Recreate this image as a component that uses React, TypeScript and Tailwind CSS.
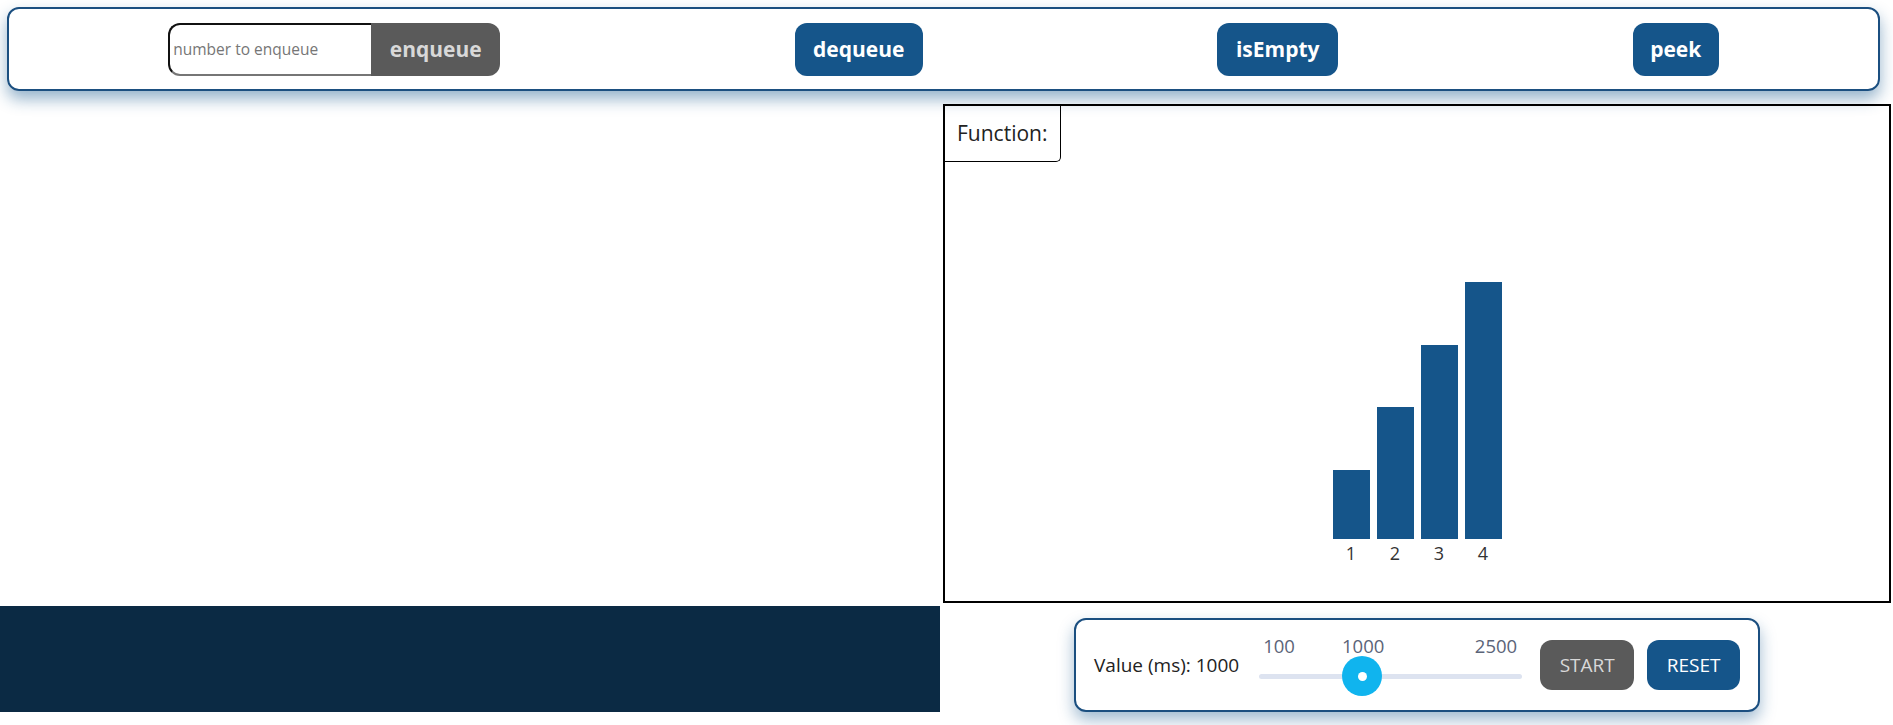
const bars = [
  { label: "1", height: 69 },
  { label: "2", height: 132 },
  { label: "3", height: 194 },
  { label: "4", height: 257 },
];

const actionButton =
  "h-[53px] rounded-[12px] bg-[#15558a] text-[21px] font-bold leading-none text-white";

function TopBar() {
  return (
    <header className="ml-[7px] mt-[7px] flex h-[84px] w-[1873px] items-center justify-around rounded-[12px] border-2 border-[#1b4f80] px-[12px] shadow-[0_8px_16px_rgba(21,86,139,0.45)]">
      <div className="flex h-[53px]">
        <input
          placeholder="number to enqueue"
          className="h-full w-[203px] rounded-l-[12px] border-2 border-r-0 border-t-[#111] border-l-[#111] border-b-[#767676] bg-white px-[3px] text-[15.5px] text-[#222] outline-none placeholder:text-[#767676]"
        />
        <button className="h-full w-[129px] rounded-r-[12px] bg-[#5a5a5a] text-[21px] font-bold leading-none text-[#d8d8d8]">
          enqueue
        </button>
      </div>
      <button className={`${actionButton} w-[128px]`}>dequeue</button>
      <button className={`${actionButton} w-[121px]`}>isEmpty</button>
      <button className={`${actionButton} w-[86px]`}>peek</button>
    </header>
  );
}

function FunctionPanel() {
  return (
    <section className="flex h-[499px] flex-col border-2 border-black">
      <div className="flex h-[56px] w-fit items-center rounded-br-[5px] border-r border-b border-black pl-[12px] pr-[13px] text-[21px] text-[#222]">
        Function:
      </div>
      <div className="mt-[120px] flex justify-center gap-[7px]">
        {bars.map((bar) => (
          <div key={bar.label} className="flex flex-col items-center justify-end">
            <div className="w-[37px] bg-[#15558a]" style={{ height: bar.height }} />
            <span className="mt-[2px] text-[18px] leading-[24px] text-[#333]">{bar.label}</span>
          </div>
        ))}
      </div>
    </section>
  );
}

function SpeedSlider() {
  return (
    <div className="flex w-[263px] flex-col">
      <div className="relative h-[24px] text-[18.5px] leading-[24px] text-[#5b6478]">
        <span className="absolute left-[4px] top-0">100</span>
        <span className="absolute left-[104px] top-0 -translate-x-1/2">1000</span>
        <span className="absolute right-[5px] top-0">2500</span>
      </div>
      <div className="relative -mt-[2px] h-[40px]">
        <div className="absolute left-0 right-0 top-[18px] h-[5px] rounded-full bg-[#dde3f0]" />
        <div className="absolute left-[83px] top-0 flex h-[40px] w-[40px] items-center justify-center rounded-full bg-[#10b4ee]">
          <div className="h-[9px] w-[9px] rounded-full bg-white" />
        </div>
      </div>
    </div>
  );
}

function Controls() {
  return (
    <div className="mx-auto mt-[15px] flex h-[94px] w-[686px] items-center rounded-[12px] border-2 border-[#1b4f80] bg-white pl-[18px] shadow-[0_8px_16px_rgba(21,86,139,0.4)]">
      <span className="text-[19px] text-[#222]">Value (ms): 1000</span>
      <div className="ml-[20px]">
        <SpeedSlider />
      </div>
      <button className="ml-[18px] h-[50px] w-[94px] rounded-[12px] bg-[#5a5a5a] text-[19px] text-[#d8d8d8]">
        START
      </button>
      <button className="ml-[13px] h-[50px] w-[93px] rounded-[12px] bg-[#15558a] text-[19px] text-white">
        RESET
      </button>
    </div>
  );
}

export default function App() {
  return (
    <div className="h-[725px] w-[1893px] overflow-hidden bg-white font-['Open_Sans',sans-serif]">
      <TopBar />
      <main className="mt-[13px] grid grid-cols-[940px_948px] gap-x-[3px]">
        <div />
        <FunctionPanel />
        <div className="mt-[3px] h-[106px] bg-[#0b2a44]" />
        <Controls />
      </main>
    </div>
  );
}
